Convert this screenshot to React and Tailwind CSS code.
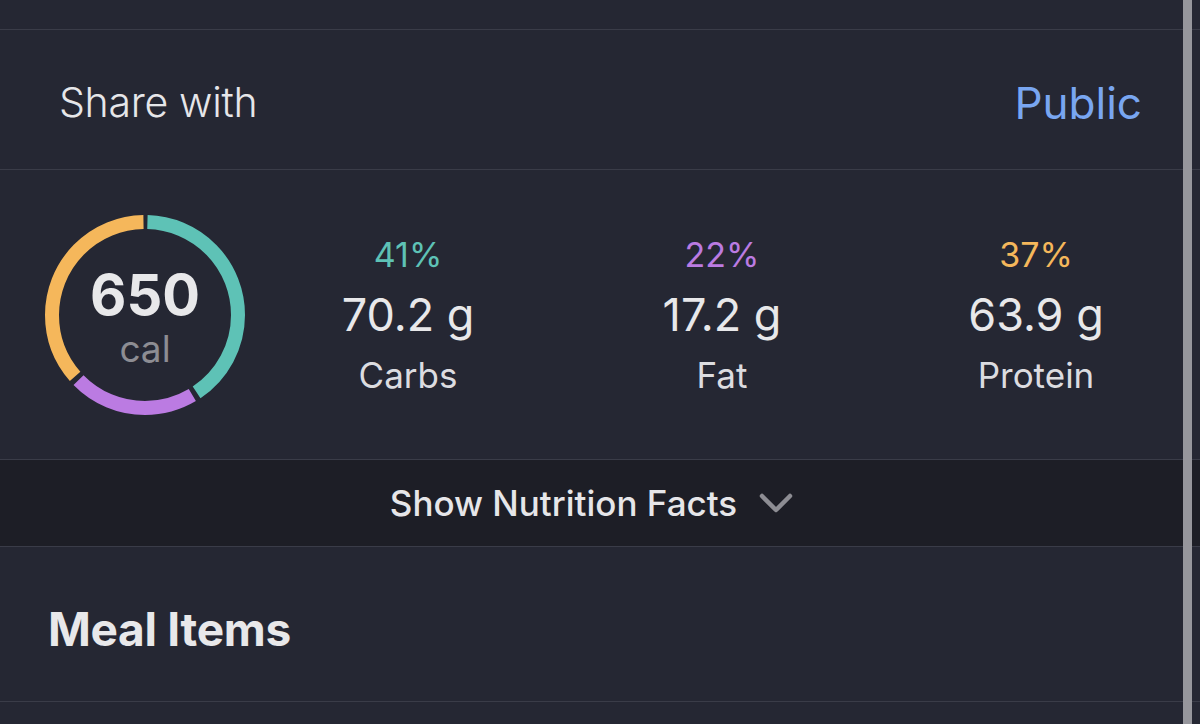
import React from 'react';

const macros = [
  { name: 'Carbs', pct: 41, grams: '70.2 g', color: '#5ec2b6' },
  { name: 'Fat', pct: 22, grams: '17.2 g', color: '#bb7be2' },
  { name: 'Protein', pct: 37, grams: '63.9 g', color: '#f5b75b' },
];

const CalorieRing = ({ calories }) => {
  const r = 93;
  const c = 2 * Math.PI * r;
  const gap = 5;
  let start = 0;

  return (
    <div className="relative w-[200px] h-[200px]">
      <svg width="200" height="200" viewBox="0 0 200 200" className="-rotate-90">
        {macros.map((m) => {
          const len = (m.pct / 100) * c;
          const seg = (
            <circle
              key={m.name}
              cx="100"
              cy="100"
              r={r}
              fill="none"
              stroke={m.color}
              strokeWidth="14"
              strokeDasharray={`${len - gap} ${c}`}
              strokeDashoffset={-(start + gap / 2)}
            />
          );
          start += len;
          return seg;
        })}
      </svg>
      <div className="absolute inset-0 flex flex-col items-center pt-[50px]">
        <span className="text-[56px] font-bold leading-[60px] text-[#e8e8ea]">{calories}</span>
        <span className="text-[37px] leading-[44px] mt-[2px] text-[#8d8d93]">cal</span>
      </div>
    </div>
  );
};

const MacroColumn = ({ macro }) => (
  <div className="flex flex-col items-center">
    <span className="text-[34px] leading-[60px]" style={{ color: macro.color }}>
      {macro.pct}%
    </span>
    <span className="text-[45px] leading-[60px] text-[#e8e8ea]">{macro.grams}</span>
    <span className="text-[35px] leading-[60px] text-[#dcdce0]">{macro.name}</span>
  </div>
);

export default function App() {
  return (
    <div
      className="relative w-[1200px] h-[724px] overflow-hidden bg-[#252733] text-[#e8e8ea]"
      style={{ fontFamily: 'Inter, "Noto Sans", sans-serif' }}
    >
      <div className="h-[30px] border-b border-[#3a3c48]" />

      <div className="h-[140px] flex items-center justify-between pl-[59px] pr-[58px] pt-[6px] border-b border-[#3a3c48]">
        <span className="text-[41px] font-light text-[#e6e6e9] tracking-[-0.3px]">Share with</span>
        <span className="text-[44px] text-[#79a6f1]">Public</span>
      </div>

      <div className="h-[289px] flex items-center">
        <div className="w-[251px] pl-[45px]">
          <CalorieRing calories={650} />
        </div>
        <div className="w-[942px] grid grid-cols-3">
          {macros.map((m) => (
            <MacroColumn key={m.name} macro={m} />
          ))}
        </div>
      </div>

      <div className="h-[88px] flex items-center justify-center gap-[22px] pr-[17px] bg-[#1d1e26] border-y border-[#3a3c48]">
        <span className="text-[35px] font-medium text-[#e6e6e9]">Show Nutrition Facts</span>
        <svg width="34" height="22" viewBox="0 0 34 22" fill="none">
          <path d="M3 4 L17 18 L31 4" stroke="#8d8d93" strokeWidth="4.5" strokeLinecap="round" strokeLinejoin="round" />
        </svg>
      </div>

      <div className="h-[155px] flex items-center pl-[48px] pt-[10px] border-b border-[#3a3c48]">
        <h2 className="text-[46px] font-bold text-[#e8e8ea] tracking-[-0.3px]">Meal Items</h2>
      </div>

      <div className="absolute top-0 bottom-0 left-[1183px] w-[9px] bg-[#96969c]" />
    </div>
  );
}
